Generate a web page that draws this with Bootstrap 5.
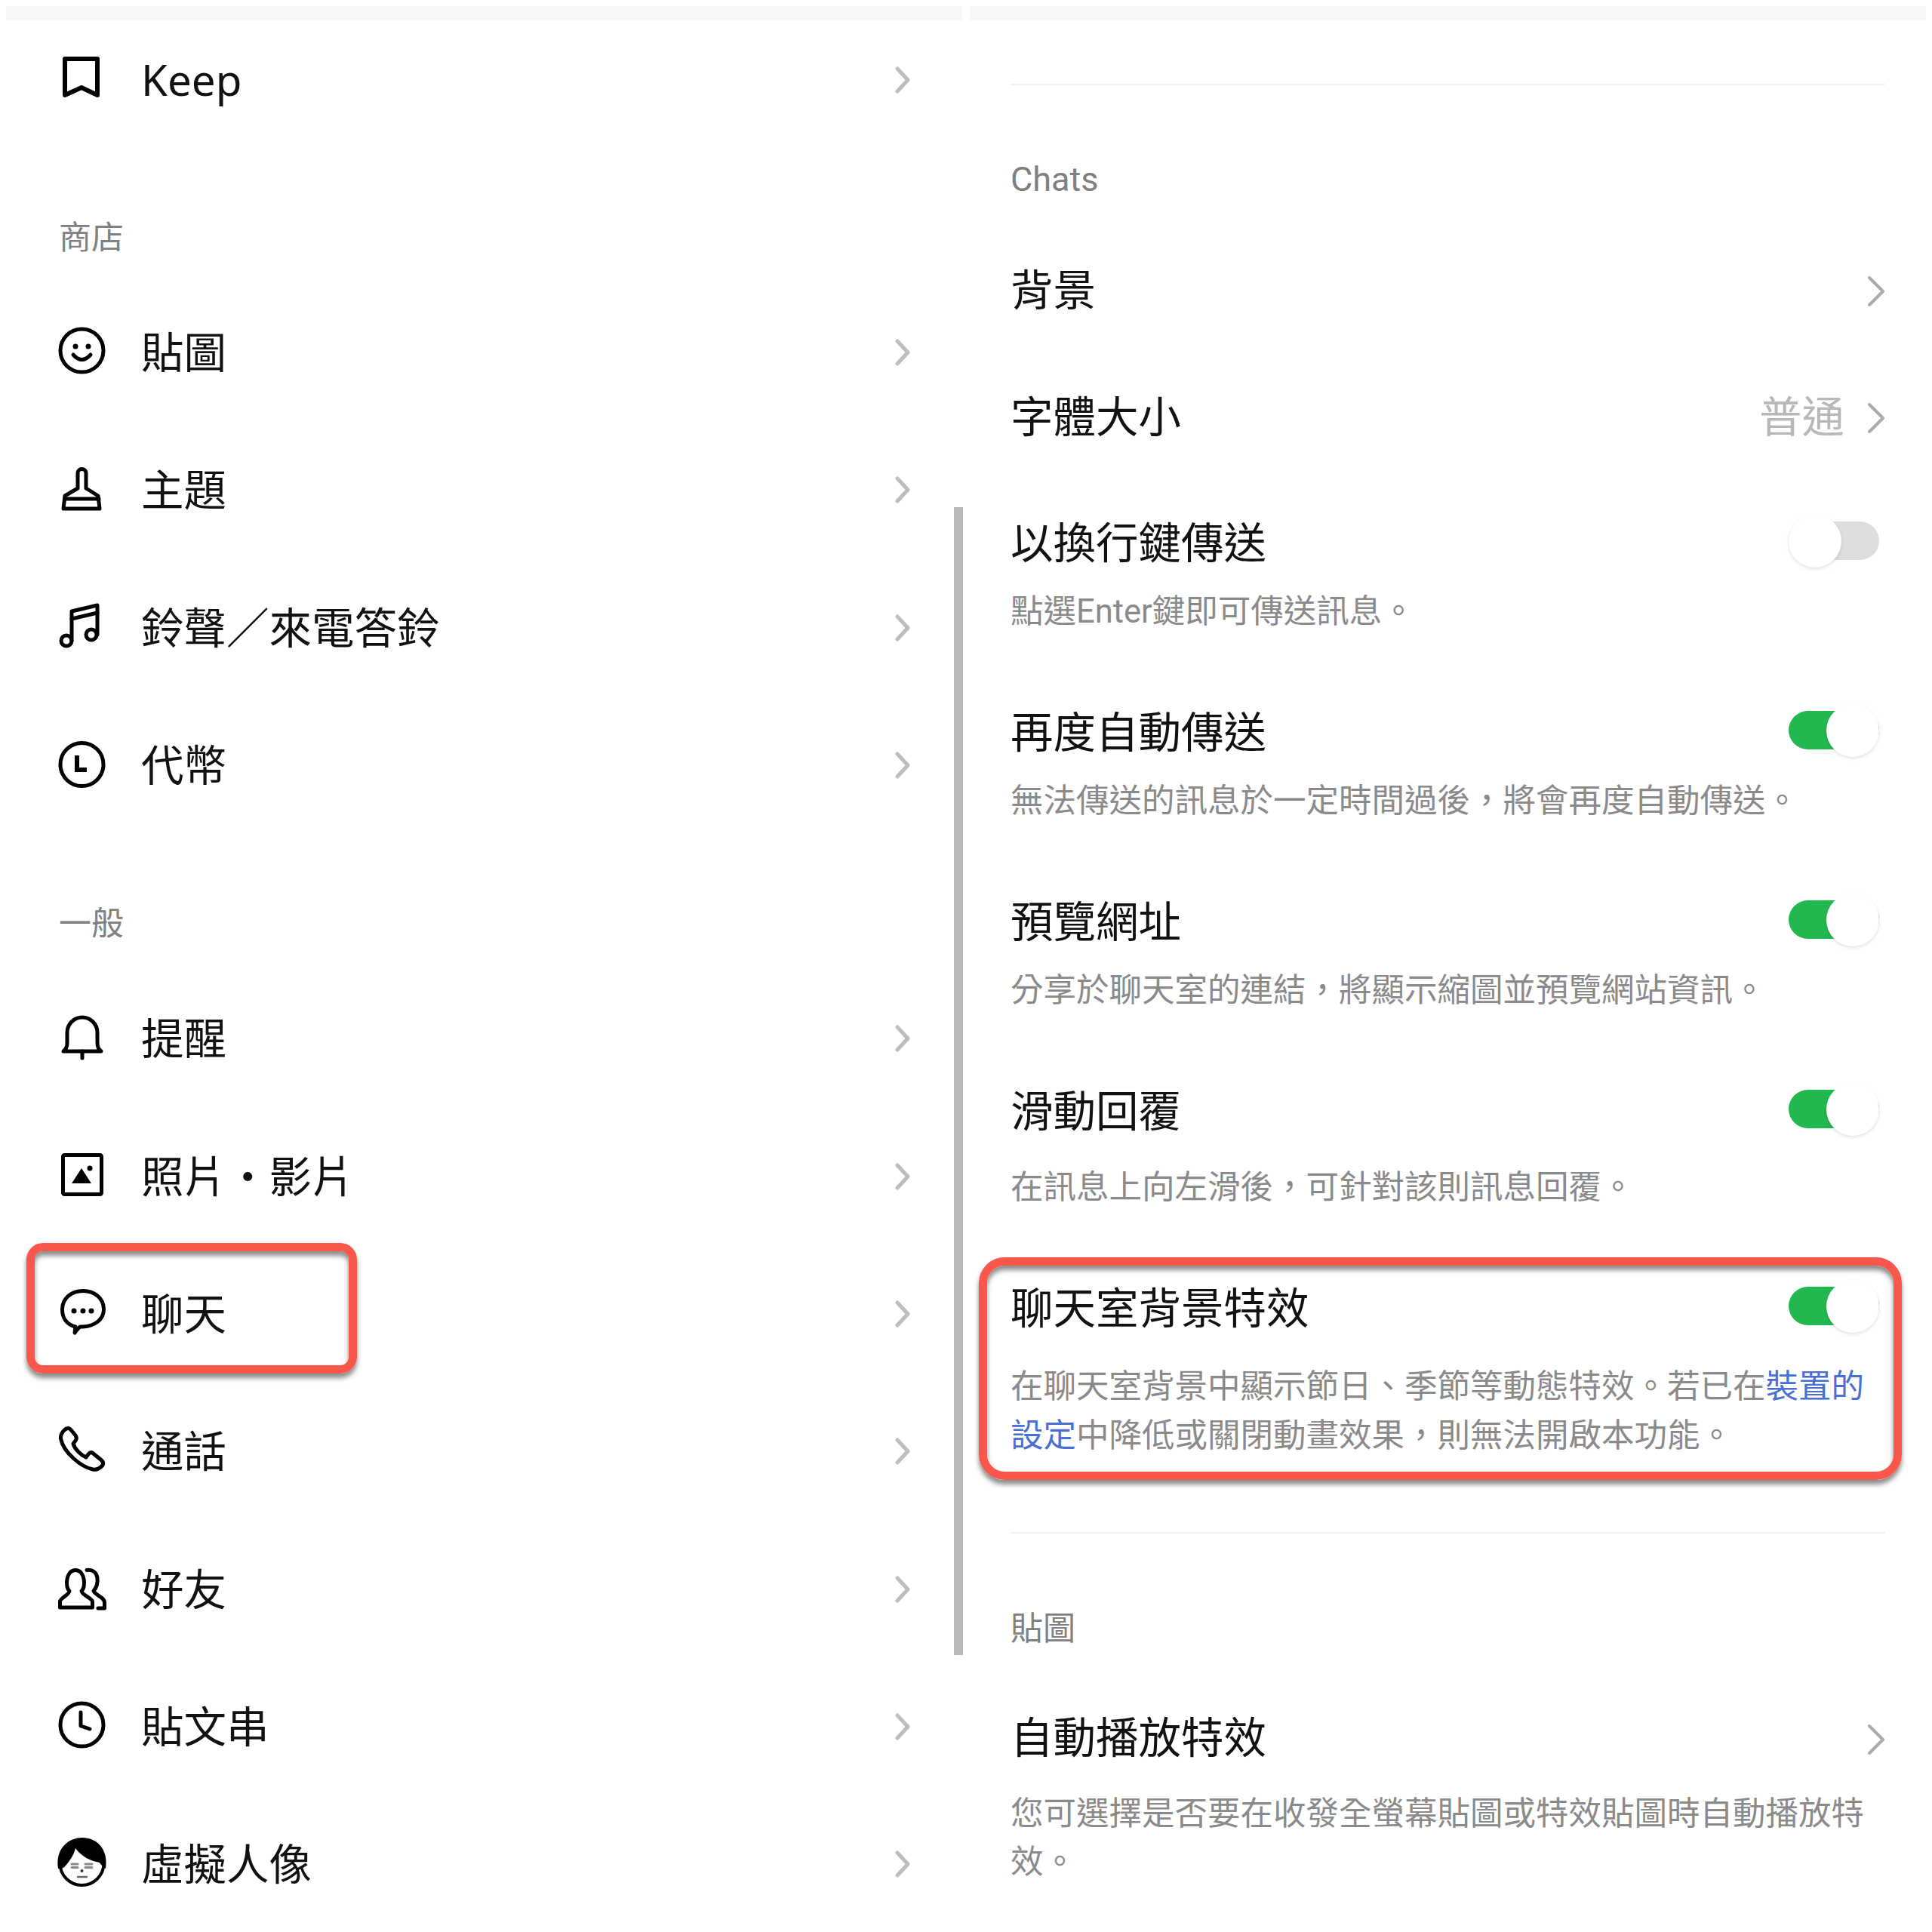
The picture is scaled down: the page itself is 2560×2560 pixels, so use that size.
<!DOCTYPE html>
<html lang="zh-Hant">
<head>
    <meta charset="UTF-8">
    <meta name="viewport" content="width=device-width, initial-scale=1.0">
    <title>LINE 設定</title>
    <link href="https://cdn.jsdelivr.net/npm/bootstrap@5.3.0/dist/css/bootstrap.min.css" rel="stylesheet">
    <style>
        body { background: #fff; width: 2560px; height: 2560px; overflow: hidden; font-family: "Noto Sans", "Noto Sans CJK TC", sans-serif; color: #111; }
        .page { position: relative; width: 2560px; height: 2560px; }
        .top-bar { height: 19px; margin-top: 8px; background: #f7f7f7; border-radius: 4px; }

        /* left panel */
        .left-panel { width: 1267px; margin-left: 8px; }
        .menu-row { height: 182.3px; padding-left: 64px; padding-right: 69px; font-size: 56.5px; line-height: 70px; }
        .menu-row.first { height: 158px; }
        .menu-row svg.ico { flex: 0 0 72px; margin-right: 43px; fill: none; stroke: #000; stroke-width: 5; stroke-linejoin: round; stroke-linecap: round; }
        .chev { fill: none; stroke: #bdbdbd; stroke-width: 5; stroke-linecap: round; stroke-linejoin: round; }
        .sect-a { height: 191px; padding: 100px 0 0 70px; }
        .sect-b { height: 180px; padding: 89px 0 0 70px; }
        .sect-label { font-size: 43px; line-height: 60px; color: #808080; font-family: "Roboto", "Noto Sans CJK TC", sans-serif; }
        .sect-label.latin { font-size: 45px; }

        /* right panel */
        .right-panel { width: 1267px; margin-left: 10px; }
        .right-inner { padding: 0 54px; }
        .thin-line { height: 2px; background: #f0f0f0; }
        .line-top { margin-top: 84px; }
        .line-low { margin-top: 94.5px; }
        .chats-head { padding-top: 95px; height: 187px; }
        .sticker-head { padding-top: 96px; height: 237px; }
        .plain-row { height: 168px; font-size: 56.5px; }
        .opt-title { font-size: 56.5px; line-height: 70px; font-family: "Roboto", "Noto Sans CJK TC", sans-serif; }
        .opt-block { padding: 50px 0 44px; }
        .opt-sub { font-size: 43.5px; line-height: 65px; margin-top: 22px; color: #8a8a8a; font-family: "Roboto", "Noto Sans CJK TC", sans-serif; }
        .opt-sub.wide { margin-top: 32px; }
        .opt-sub.wider { margin-top: 35px; }
        .opt-sub a { color: #4a6fd4; text-decoration: none; }
        .opt-sub.tight { line-height: 64px; margin-top: 33px; }
        .val-text { color: #b8b8b8; margin-right: 30px; }
        .chev-r { stroke: #ababab; stroke-width: 4; margin-top: 3px; }

        /* toggle */
        .tog { position: relative; width: 120px; height: 51px; margin-right: 8px; margin-bottom: 10px; border-radius: 26px; flex: 0 0 120px; }
        .tog.off { background: #dedede; }
        .tog.on { background: #23b84f; }
        .tog i { position: absolute; top: -9px; width: 70px; height: 70px; border-radius: 50%; background: #fff; box-shadow: 0 2px 4px rgba(0, 0, 0, .12); }
        .tog.off i { left: 0; }
        .tog.on i { right: 0; }

        /* overlays */
        .scroll-thumb { position: absolute; left: 1264px; top: 672px; width: 12px; height: 1521px; background: #b9b9b9; }
        .red-mark { position: absolute; border: 11px solid #f9574c; box-shadow: 0 6px 6px rgba(0, 0, 0, .45), inset 0 6px 6px rgba(0, 0, 0, .45); }
        .mark-left { left: 35px; top: 1647px; width: 438px; height: 173px; border-radius: 22px; }
        .mark-right { left: 1297px; top: 1666px; width: 1223px; height: 295px; border-radius: 34px; }
    </style>
</head>
<body>
<div class="page d-flex">

    <!-- Lista de la izquierda -->
    <div class="left-panel">
        <div class="top-bar"></div>

        <div class="menu-row first d-flex align-items-center">
            <svg class="ico" width="72" height="72" viewBox="0 0 72 72" style="stroke-width:6"><path d="M14 8H57V56L36 46L14 56Z"/></svg>
            <span class="flex-grow-1">Keep</span>
            <svg class="chev" width="24" height="40" viewBox="0 0 24 40"><path d="M7 5L21 20L7 35"/></svg>
        </div>

        <div class="sect-a"><div class="sect-label">商店</div></div>

        <div class="menu-row d-flex align-items-center">
            <svg class="ico" width="72" height="72" viewBox="0 0 72 72"><circle cx="36.5" cy="33.5" r="28.5"/><circle cx="28" cy="28" r="3.5" fill="#000" stroke="none"/><circle cx="45" cy="28" r="3.5" fill="#000" stroke="none"/><path d="M25 39Q36.5 52 48 39"/></svg>
            <span class="flex-grow-1">貼圖</span>
            <svg class="chev" width="24" height="40" viewBox="0 0 24 40"><path d="M7 5L21 20L7 35"/></svg>
        </div>
        <div class="menu-row d-flex align-items-center">
            <svg class="ico" width="72" height="72" viewBox="0 0 72 72"><path d="M31 34V14a5.5 5.5 0 0 1 11 0V34L58 44L60 61H12L14 44Z"/><path d="M14 48H59"/></svg>
            <span class="flex-grow-1">主題</span>
            <svg class="chev" width="24" height="40" viewBox="0 0 24 40"><path d="M7 5L21 20L7 35"/></svg>
        </div>
        <div class="menu-row d-flex align-items-center">
            <svg class="ico" width="72" height="72" viewBox="0 0 72 72"><circle cx="16" cy="53" r="7"/><circle cx="49" cy="45" r="7"/><path d="M23 53V14L57 6V45"/><path d="M23 24L57 16"/></svg>
            <span class="flex-grow-1">鈴聲／來電答鈴</span>
            <svg class="chev" width="24" height="40" viewBox="0 0 24 40"><path d="M7 5L21 20L7 35"/></svg>
        </div>
        <div class="menu-row d-flex align-items-center">
            <svg class="ico" width="72" height="72" viewBox="0 0 72 72"><circle cx="36.5" cy="35" r="28.5"/><path d="M30 23V42H43" style="stroke-width:6;stroke-linecap:butt;stroke-linejoin:miter"/></svg>
            <span class="flex-grow-1">代幣</span>
            <svg class="chev" width="24" height="40" viewBox="0 0 24 40"><path d="M7 5L21 20L7 35"/></svg>
        </div>

        <div class="sect-b"><div class="sect-label">一般</div></div>

        <div class="menu-row d-flex align-items-center">
            <svg class="ico" width="72" height="72" viewBox="0 0 72 72"><path d="M12 53C16 50 17 46 17 42V28a20 20 0 0 1 40 0V42C57 46 58 50 62 53Z"/><path d="M37 53V62"/></svg>
            <span class="flex-grow-1">提醒</span>
            <svg class="chev" width="24" height="40" viewBox="0 0 24 40"><path d="M7 5L21 20L7 35"/></svg>
        </div>
        <div class="menu-row d-flex align-items-center">
            <svg class="ico" width="72" height="72" viewBox="0 0 72 72"><rect x="11.5" y="7.5" width="51" height="52" rx="2"/><path d="M36 25L49 45H23Z" fill="#000" stroke="none"/><circle cx="47" cy="25" r="3.5" fill="#000" stroke="none"/></svg>
            <span class="flex-grow-1">照片・影片</span>
            <svg class="chev" width="24" height="40" viewBox="0 0 24 40"><path d="M7 5L21 20L7 35"/></svg>
        </div>
        <div class="menu-row d-flex align-items-center">
            <svg class="ico" width="72" height="72" viewBox="0 0 72 72"><path d="M28 53C16 50 10.500 41 10.500 30C10.500 15 23 5.500 38 5.500C53 5.500 65.500 15 65.500 30C65.500 44 53 52 38 53H34C32 55 29 58 27 61Z"/><circle cx="26" cy="32" r="3.500" fill="#000" stroke="none"/><circle cx="38" cy="32" r="3.500" fill="#000" stroke="none"/><circle cx="49" cy="32" r="3.500" fill="#000" stroke="none"/></svg>
            <span class="flex-grow-1">聊天</span>
            <svg class="chev" width="24" height="40" viewBox="0 0 24 40"><path d="M7 5L21 20L7 35"/></svg>
        </div>
        <div class="menu-row d-flex align-items-center">
            <svg class="ico" width="72" height="72" viewBox="0 0 72 72"><path d="M8.500 19C8 12 14 6 18 5.500C20 5 22 7.500 24 10L28 15C30 18 29.500 20 28 22L25 26C27 33 35 41 42 44L45 40C47 37.500 49 37 51 38.500L62 47.500C65 50 65.500 52 64 54.500C60 59 56 61 51 60C36 57 12 38 8.500 19Z"/></svg>
            <span class="flex-grow-1">通話</span>
            <svg class="chev" width="24" height="40" viewBox="0 0 24 40"><path d="M7 5L21 20L7 35"/></svg>
        </div>
        <div class="menu-row d-flex align-items-center">
            <svg class="ico" width="72" height="72" viewBox="0 0 72 72"><path d="M7.500 60V52C7.500 48 20 43 20 38C14 34 15 10.500 28 10.500C41 10.500 42 34 36 38C36 43 50 48 50.500 52V60Z"/><path d="M43 10.500C60 8 60 30 52 38C54 44 67 46 66.500 54V61H58"/></svg>
            <span class="flex-grow-1">好友</span>
            <svg class="chev" width="24" height="40" viewBox="0 0 24 40"><path d="M7 5L21 20L7 35"/></svg>
        </div>
        <div class="menu-row d-flex align-items-center">
            <svg class="ico" width="72" height="72" viewBox="0 0 72 72"><circle cx="36.500" cy="33.500" r="28.500"/><path d="M35 17V35L47 39"/></svg>
            <span class="flex-grow-1">貼文串</span>
            <svg class="chev" width="24" height="40" viewBox="0 0 24 40"><path d="M7 5L21 20L7 35"/></svg>
        </div>
        <div class="menu-row d-flex align-items-center">
            <svg class="ico" width="72" height="72" viewBox="0 0 72 72"><circle cx="36.500" cy="35" r="29" style="stroke-width:4"/><path d="M5 42C1 14 20 1 37 1C56 1 72 16 68 42C66 40 62 38 60 34C48 32 36 26 28 15C26 24 20 32 15 38C12 42 8 43 5 42Z" fill="#000" stroke="none"/><path d="M23 36H31M41 36H50" stroke="#888" style="stroke-width:3"/><path d="M23 40.500H31M41 40.500H50" stroke="#888" style="stroke-width:3"/><circle cx="36.500" cy="45" r="2" fill="#333" stroke="none"/><path d="M31 53H43" stroke="#666" style="stroke-width:2.500"/></svg>
            <span class="flex-grow-1">虛擬人像</span>
            <svg class="chev" width="24" height="40" viewBox="0 0 24 40"><path d="M7 5L21 20L7 35"/></svg>
        </div>
    </div>

    <!-- Panel de chats -->
    <div class="right-panel">
        <div class="top-bar"></div>
        <div class="right-inner">
            <div class="thin-line line-top"></div>
            <div class="chats-head"><div class="sect-label latin">Chats</div></div>

            <div class="plain-row d-flex align-items-center">
                <span class="flex-grow-1">背景</span>
                <svg class="chev chev-r" width="24" height="40" viewBox="0 0 24 40"><path d="M3 2L21 20L3 38"/></svg>
            </div>
            <div class="plain-row d-flex align-items-center">
                <span class="flex-grow-1">字體大小</span>
                <span class="val-text">普通</span>
                <svg class="chev chev-r" width="24" height="40" viewBox="0 0 24 40"><path d="M3 2L21 20L3 38"/></svg>
            </div>

            <div class="opt-block">
                <div class="d-flex align-items-center justify-content-between">
                    <div class="opt-title">以換行鍵傳送</div>
                    <div class="tog off"><i></i></div>
                </div>
                <div class="opt-sub">點選Enter鍵即可傳送訊息。</div>
            </div>
            <div class="opt-block">
                <div class="d-flex align-items-center justify-content-between">
                    <div class="opt-title">再度自動傳送</div>
                    <div class="tog on"><i></i></div>
                </div>
                <div class="opt-sub">無法傳送的訊息於一定時間過後，將會再度自動傳送。</div>
            </div>
            <div class="opt-block">
                <div class="d-flex align-items-center justify-content-between">
                    <div class="opt-title">預覽網址</div>
                    <div class="tog on"><i></i></div>
                </div>
                <div class="opt-sub">分享於聊天室的連結，將顯示縮圖並預覽網站資訊。</div>
            </div>
            <div class="opt-block">
                <div class="d-flex align-items-center justify-content-between">
                    <div class="opt-title">滑動回覆</div>
                    <div class="tog on"><i></i></div>
                </div>
                <div class="opt-sub wide">在訊息上向左滑後，可針對該則訊息回覆。</div>
            </div>
            <div class="opt-block pb-0">
                <div class="d-flex align-items-center justify-content-between">
                    <div class="opt-title">聊天室背景特效</div>
                    <div class="tog on"><i></i></div>
                </div>
                <div class="opt-sub wider">在聊天室背景中顯示節日、季節等動態特效。若已在<a href="#">裝置的設定</a>中降低或關閉動畫效果，則無法開啟本功能。</div>
            </div>

            <div class="thin-line line-low"></div>
            <div class="sticker-head"><div class="sect-label">貼圖</div></div>

            <div class="d-flex align-items-center justify-content-between">
                <div class="opt-title">自動播放特效</div>
                <svg class="chev chev-r" width="24" height="40" viewBox="0 0 24 40"><path d="M3 2L21 20L3 38"/></svg>
            </div>
            <div class="opt-sub tight">您可選擇是否要在收發全螢幕貼圖或特效貼圖時自動播放特效。</div>
        </div>
    </div>

    <!-- Capas encima -->
    <div class="scroll-thumb"></div>
    <div class="red-mark mark-left"></div>
    <div class="red-mark mark-right"></div>
</div>

<script src="https://cdn.jsdelivr.net/npm/bootstrap@5.3.0/dist/js/bootstrap.bundle.min.js"></script>
</body>
</html>
